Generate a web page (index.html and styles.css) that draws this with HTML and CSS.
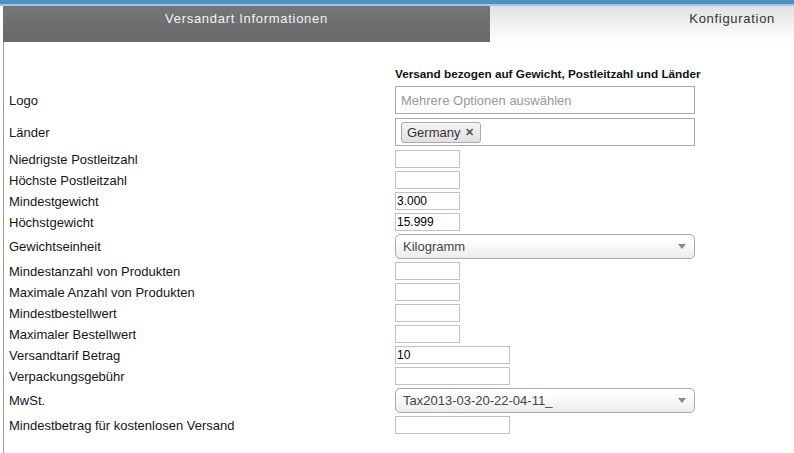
FILE: index.html
```html
<!DOCTYPE html>
<html lang="de">
<head>
<meta charset="utf-8">
<title>Versandart</title>
<link rel="stylesheet" href="styles.css">
</head>
<body>
<div class="topbar"></div>
<div class="tabs">
  <div class="tab tab-active">Versandart Informationen</div>
  <div class="tab tab-inactive">Konfiguration</div>
</div>
<div class="panel">
  <div class="row heading-row"><span class="label"></span><h2 class="heading">Versand bezogen auf Gewicht, Postleitzahl und Länder</h2></div>
  <div class="row row-multi"><span class="label">Logo</span><div class="multi"><span class="placeholder">Mehrere Optionen auswählen</span></div></div>
  <div class="row row-multi"><span class="label">Länder</span><div class="multi"><span class="tag">Germany <span class="tag-x">✕</span></span></div></div>
  <div class="row"><span class="label">Niedrigste Postleitzahl</span><input class="inp inp-s" type="text" value=""></div>
  <div class="row"><span class="label">Höchste Postleitzahl</span><input class="inp inp-s" type="text" value=""></div>
  <div class="row"><span class="label">Mindestgewicht</span><input class="inp inp-s" type="text" value="3.000"></div>
  <div class="row"><span class="label">Höchstgewicht</span><input class="inp inp-s" type="text" value="15.999"></div>
  <div class="row"><span class="label">Gewichtseinheit</span><div class="selectbox"><span>Kilogramm</span><svg class="arrow" width="8" height="5" viewBox="0 0 8 5"><path d="M0 0H8L4 5Z" fill="#888"/></svg></div></div>
  <div class="row"><span class="label">Mindestanzahl von Produkten</span><input class="inp inp-s" type="text" value=""></div>
  <div class="row"><span class="label">Maximale Anzahl von Produkten</span><input class="inp inp-s" type="text" value=""></div>
  <div class="row"><span class="label">Mindestbestellwert</span><input class="inp inp-s" type="text" value=""></div>
  <div class="row"><span class="label">Maximaler Bestellwert</span><input class="inp inp-s" type="text" value=""></div>
  <div class="row"><span class="label">Versandtarif Betrag</span><input class="inp inp-m" type="text" value="10"></div>
  <div class="row"><span class="label">Verpackungsgebühr</span><input class="inp inp-m" type="text" value=""></div>
  <div class="row"><span class="label">MwSt.</span><div class="selectbox"><span>Tax2013-03-20-22-04-11_</span><svg class="arrow" width="8" height="5" viewBox="0 0 8 5"><path d="M0 0H8L4 5Z" fill="#888"/></svg></div></div>
  <div class="row"><span class="label">Mindestbetrag für kostenlosen Versand</span><input class="inp inp-m" type="text" value=""></div>
</div>
</body>
</html>
```
FILE: styles.css
```css
html, body {
  margin: 0;
  padding: 0;
  background: #fff;
  font-family: "Liberation Sans", Arial, sans-serif;
  font-size: 12px;
  color: #1a1a1a;
  height: 100%;
}
body {
  display: flex;
  flex-direction: column;
}
.topbar {
  height: 4px;
  background: #4a93c2;
  border-bottom: 2px solid #b3bce2;
}
.tabs {
  display: flex;
  height: 36px;
  margin-left: 3px;
}
.tab {
  box-sizing: border-box;
  height: 36px;
  padding-top: 5px;
  line-height: 16px;
  font-size: 13px;
  letter-spacing: 0.7px;
}
.tab-active {
  width: 487px;
  text-align: center;
  color: #f2f2f2;
  background: linear-gradient(#767676, #68686b);
}
.tab-inactive {
  flex: 1;
  text-align: right;
  padding-right: 19px;
  color: #333;
  background: linear-gradient(#e2e2e2, #ffffff);
}
.panel {
  flex: 1;
  margin-left: 3px;
  border-left: 1px solid #9a9a9a;
  padding: 25px 0 0 5px;
}
.row {
  display: flex;
  align-items: center;
  margin-bottom: 3px;
}
.row-multi {
  margin-bottom: 4px;
}
.heading-row {
  margin-bottom: 5px;
}
.label {
  width: 386px;
  flex: none;
  font-size: 13px;
  line-height: 15px;
  color: #151515;
}
.heading {
  margin: 0;
  font-size: 11.75px;
  font-weight: bold;
  line-height: 14px;
  color: #111;
}
.multi {
  box-sizing: border-box;
  width: 300px;
  height: 28px;
  border: 1px solid #aaa;
  display: flex;
  align-items: center;
  padding-left: 5px;
  background: #fff;
}
.placeholder {
  font-size: 13px;
  color: #999;
}
.tag {
  box-sizing: border-box;
  height: 21px;
  display: inline-flex;
  align-items: center;
  padding: 0 6px 0 5px;
  border: 1px solid #aaa;
  border-radius: 3px;
  background: linear-gradient(#f4f4f4, #e0e0e0);
  font-size: 13px;
  color: #333;
}
.tag-x {
  margin-left: 5px;
  font-size: 11px;
  font-weight: bold;
  color: #555;
}
.inp {
  box-sizing: border-box;
  height: 18px;
  border: 1px solid #c2c2c2;
  padding: 0 1px;
  margin: 0;
  font-family: "Liberation Sans", Arial, sans-serif;
  font-size: 12px;
  color: #000;
  background: #fff;
  outline: none;
}
.inp-s {
  width: 65px;
}
.inp-m {
  width: 115px;
}
.selectbox {
  box-sizing: border-box;
  width: 300px;
  height: 25px;
  border: 1px solid #aaa;
  border-radius: 5px;
  background: linear-gradient(#ffffff 20%, #ececec);
  display: flex;
  align-items: center;
  justify-content: space-between;
  padding: 0 8px 0 7px;
  font-size: 13px;
  color: #444;
}
.arrow {
  display: block;
}
```
